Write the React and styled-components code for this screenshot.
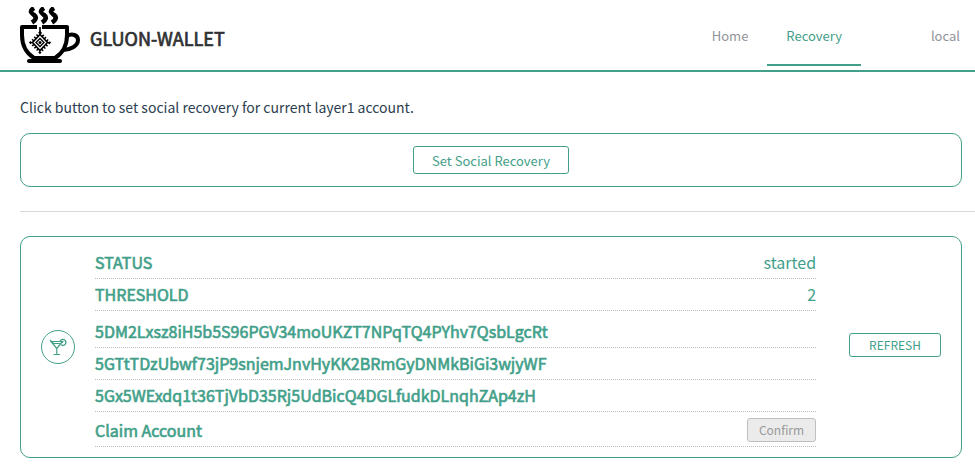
import React from "react";
import styled, { createGlobalStyle } from "styled-components";

const green = "#42a08a";

const GlobalStyle = createGlobalStyle`
  *, *::before, *::after { box-sizing: border-box; }
  body {
    margin: 0;
    background: #fff;
    color: #2c3e50;
    font-family: "Noto Sans CJK SC", "Noto Sans", sans-serif;
    font-size: 14px;
    line-height: 22px;
    overflow-x: hidden;
  }
  button { font-family: inherit; }
`;

const Header = styled.header`
  display: flex;
  justify-content: space-between;
  height: 72px;
  padding-left: 20px;
  border-bottom: 2px solid ${green};
`;

const Brand = styled.a`
  display: flex;
  align-items: center;
  gap: 10px;
  color: #303133;
  font-size: 18px;
  line-height: 28px;
  text-decoration: none;
  -webkit-text-stroke: 0.04em currentColor;

  span { padding-top: 6px; }
`;

const Nav = styled.nav`
  display: flex;
`;

const NavLink = styled.a`
  display: flex;
  align-items: center;
  height: 66px;
  padding: 8px 19px 0;
  color: ${(p) => (p.$active ? green : "#909399")};
  border-bottom: 2px solid ${(p) => (p.$active ? green : "transparent")};
  font-size: 13px;
  line-height: 20px;
  text-decoration: none;
`;

const Network = styled(NavLink)`
  margin-left: 51px;
  padding-right: 15px;
`;

const Main = styled.main`
  padding: 24px 0 14px 20px;
`;

const Intro = styled.p`
  margin: 0 0 15px;
`;

const Card = styled.section`
  display: flex;
  align-items: center;
  justify-content: ${(p) => (p.$centered ? "center" : "flex-start")};
  margin-right: 13px;
  padding: ${(p) => (p.$centered ? "12px 20px" : "10px 20px")};
  border: 1px solid ${green};
  border-radius: 10px;
`;

const Divider = styled.hr`
  height: 1px;
  margin: 24px 0;
  border: 0;
  background: #d6d9e0;
`;

const Button = styled.button`
  height: ${(p) => (p.$small ? "24px" : "28px")};
  padding: ${(p) => (p.$small ? "0 11px" : "2px 18px 0")};
  border: 1px solid ${green};
  border-radius: 3px;
  background: #fff;
  color: ${green};
  font-size: ${(p) => (p.$small ? "12px" : "13px")};
  line-height: 20px;
  cursor: pointer;

  &:disabled {
    border-color: #bfbfbf;
    background: #ebebeb;
    color: #999;
    cursor: default;
  }
`;

const RefreshButton = styled(Button)`
  flex: none;
  margin: 0 0 4px 33px;
  padding: 0 19px;
`;

const Badge = styled.div`
  display: flex;
  flex: none;
  align-items: center;
  justify-content: center;
  width: 34px;
  height: 34px;
  margin-right: 20px;
  border: 1px solid ${green};
  border-radius: 50%;
  color: ${green};
`;

const Info = styled.div`
  flex: 1;
  min-width: 0;
  color: ${green};
  font-size: 16px;
`;

const Group = styled.div`
  & + & { margin-top: 5px; }
`;

const Row = styled.div`
  display: flex;
  align-items: center;
  justify-content: space-between;
  min-height: 32px;
  padding-bottom: 2px;
  border-bottom: 1px dotted #bbb;
`;

const ActionRow = styled(Row)`
  min-height: 35px;
  padding: 2px 0 0;
`;

const Label = styled.span`
  -webkit-text-stroke: 0.04em currentColor;
`;

const CupLogo = () => (
  <svg width="60" height="56" viewBox="0 0 60 56" fill="none" stroke="#000" aria-hidden="true">
    <g strokeWidth="4.6">
      <path d="M14 1c-5 3-3 5 0 7s2 5-2 7.500" />
      <path d="M24 1c-5 3-3 5 0 7s2 5-2 7.500" />
      <path d="M34 1c-5 3-3 5 0 7s2 5-2 7.500" />
    </g>
    <path d="M17 20H2v8c0 10 4 18 12 23h21c8-5 12-13 12-23v-8H22" strokeWidth="4" strokeLinejoin="round" />
    <path d="M47 29c5-3 11-1 11 4 0 6-8 10-15 10" strokeWidth="4" />
    <path d="M9 54h31" strokeWidth="4" strokeLinecap="round" />
    <path d="M20 20v6" strokeWidth="1.6" />
    <path d="m20 26 9 9.500-9 9.500-9-9.500z" strokeWidth="3" strokeDasharray="1.500 1.700" />
    <path d="m20 27.500 7.500 8-7.500 8-7.500-8z" strokeWidth="1.600" />
    <path d="m20 31.500 4 4-4 4-4-4z" strokeWidth="1.300" />
    <circle cx="20" cy="35.500" r="1.500" fill="#000" stroke="none" />
  </svg>
);

const Cocktail = () => (
  <svg width="18" height="18" viewBox="0 0 18 18" fill="none" stroke="currentColor" aria-hidden="true">
    <path d="M2 3.500h11.500L7.800 10.500zM7.800 10.500v6M4.500 16.500h6.600M1 2l3.500 3.500h7" strokeWidth="1.200" />
    <path d="M11 3.500a3 3 0 1 1 1 3.300" strokeWidth="1.400" />
    <path d="M13.500 3.500v1.500" />
  </svg>
);

const addresses = [
  "5DM2Lxsz8iH5b5S96PGV34moUKZT7NPqTQ4PYhv7QsbLgcRt",
  "5GTtTDzUbwf73jP9snjemJnvHyKK2BRmGyDNMkBiGi3wjyWF",
  "5Gx5WExdq1t36TjVbD35Rj5UdBicQ4DGLfudkDLnqhZAp4zH",
];

export default function App() {
  return (
    <>
      <GlobalStyle />
      <Header>
        <Brand href="#home">
          <CupLogo />
          <span>GLUON-WALLET</span>
        </Brand>
        <Nav>
          <NavLink href="#home">Home</NavLink>
          <NavLink href="#recovery" $active aria-current="page">Recovery</NavLink>
          <Network href="#network">local</Network>
        </Nav>
      </Header>
      <Main>
        <Intro>Click button to set social recovery for current layer1 account.</Intro>
        <Card $centered>
          <Button type="button">Set Social Recovery</Button>
        </Card>
        <Divider />
        <Card>
          <Badge><Cocktail /></Badge>
          <Info>
            <Group>
              <Row><Label>STATUS</Label><span>started</span></Row>
              <Row><Label>THRESHOLD</Label><span>2</span></Row>
            </Group>
            <Group>
              {addresses.map((address) => (
                <Row key={address}><Label>{address}</Label></Row>
              ))}
              <ActionRow>
                <Label>Claim Account</Label>
                <Button type="button" $small disabled>Confirm</Button>
              </ActionRow>
            </Group>
          </Info>
          <RefreshButton type="button" $small>REFRESH</RefreshButton>
        </Card>
      </Main>
    </>
  );
}
